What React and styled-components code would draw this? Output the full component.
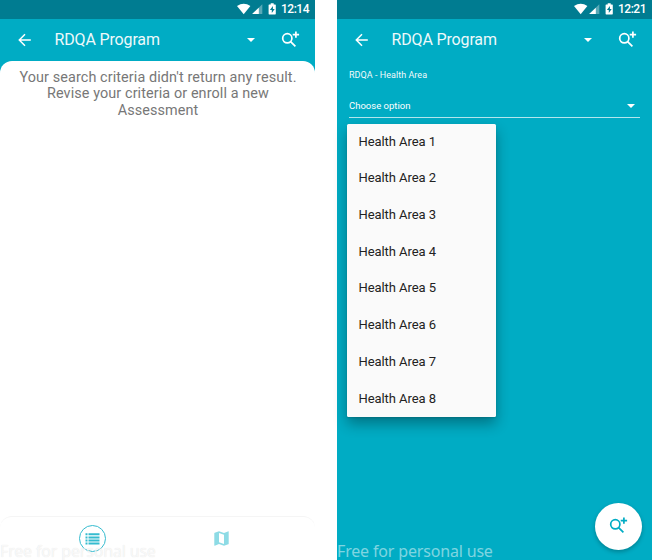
import React from 'react';
import styled, { createGlobalStyle } from 'styled-components';

const Global = createGlobalStyle`
  * { box-sizing: border-box; }
  body { margin: 0; background: #fff; font-family: Roboto, "Liberation Sans", sans-serif; }
`;

const Stage = styled.main`
  display: flex;
  justify-content: space-between;
  width: 652px;
  height: 560px;
  overflow: hidden;
`;

const Phone = styled.section`
  position: relative;
  display: flex;
  flex-direction: column;
  width: 315px;
  height: 560px;
  background: #00acc4;
`;

const StatusBar = styled.div`
  display: flex;
  flex: none;
  align-items: center;
  justify-content: flex-end;
  height: 18.5px;
  padding-right: 6px;
  background: #007c91;
  color: #fff;
`;

const Clock = styled.span`
  width: 28px;
  margin-left: 4px;
  font-size: 12px;
  font-weight: 500;
  line-height: 19px;
  letter-spacing: -0.5px;
  white-space: nowrap;
`;

const Toolbar = styled.header`
  display: flex;
  flex: none;
  align-items: center;
  height: 42.5px;
  padding: 0 15px 0 18px;
  color: #fff;
`;

const Title = styled.h1`
  flex: 1;
  margin: 0 0 0 22.5px;
  font-size: 16px;
  font-weight: 400;
  line-height: 20px;
  letter-spacing: -0.15px;
  opacity: 0.93;
`;

const ToolbarCaret = styled.span`
  display: flex;
  margin-right: 26px;
`;

const Sheet = styled.div`
  display: flex;
  flex: 1;
  flex-direction: column;
  justify-content: space-between;
  background: #fff;
  border-radius: 12px 12px 0 0;
`;

const Message = styled.p`
  margin: 0;
  padding: 8.6px 0 0 1px;
  color: #777;
  font-size: 14.4px;
  line-height: 16.5px;
  letter-spacing: 0.1px;
  text-align: center;
`;

const BottomNav = styled.nav`
  display: flex;
  height: 44px;
  padding: 9px 0 0 79px;
  border-top: 1px solid #f5f5f5;
  border-radius: 12px 12px 0 0;
`;

const ListTab = styled.div`
  display: flex;
  align-items: center;
  justify-content: center;
  width: 27px;
  height: 27px;
  margin-top: -1px;
  border: 1.25px solid #35bccf;
  border-radius: 50%;
`;

const MapTab = styled.div`
  display: flex;
  margin: 5px 0 0 108px;
`;

const Form = styled.div`
  padding: 7px 12.5px 0 12px;
  color: #fff;
`;

const Label = styled.div`
  font-size: 9px;
  line-height: 15px;
  letter-spacing: 0.04px;
  opacity: 0.95;
`;

const Select = styled.div`
  display: flex;
  align-items: center;
  justify-content: space-between;
  height: 24px;
  margin-top: 10.5px;
  padding: 1px 5px 0 0;
  border-bottom: 1px solid rgba(255, 255, 255, 0.7);
  font-size: 9.5px;
`;

const Menu = styled.ul`
  position: absolute;
  left: 9.5px;
  top: 123.5px;
  width: 149.5px;
  height: 293.5px;
  margin: 0;
  padding: 0;
  background: #fafafa;
  border-radius: 1.5px;
  box-shadow: 0 7px 14px rgba(0, 0, 0, 0.32), 0 1px 2px rgba(0, 0, 0, 0.12);
  list-style: none;
`;

const Option = styled.li`
  height: 36.72px;
  padding-left: 12px;
  color: #222;
  font-size: 13px;
  line-height: 36.4px;
  letter-spacing: -0.07px;
`;

const Fab = styled.div`
  position: absolute;
  left: 258px;
  top: 502.5px;
  display: flex;
  align-items: center;
  justify-content: center;
  width: 47px;
  height: 47px;
  padding-bottom: 2px;
  background: #fff;
  border-radius: 50%;
  box-shadow: 0 2px 4px rgba(0, 0, 0, 0.25);
  color: #00acc4;
`;

const Watermark = styled.div`
  position: absolute;
  left: 0;
  bottom: 0;
  height: 18px;
  color: ${(p) => (p.$onWhite ? 'rgba(255, 255, 255, 0.75)' : 'rgba(255, 255, 255, 0.5)')};
  font-family: "Noto Sans", sans-serif;
  font-size: 16px;
  line-height: 18px;
  letter-spacing: -0.17px;
  text-shadow: ${(p) => (p.$onWhite ? '0 0 1px rgba(0, 0, 0, 0.13)' : 'none')};
  white-space: nowrap;
`;

const StatusIcons = () => (
  <svg width="40" height="18" viewBox="0 0 40 18" fill="currentColor">
    <path d="M0 6Q6.700 1.400 13.400 6L6.700 14.200Z" />
    <path d="M25.3 4.3V14H15.2Z" opacity=".35" />
    <path d="M21.8 7.700V14H15.2Z" />
    <path fillRule="evenodd" d="M33.700 3.300h3v1.200h1.500q.6 0 .6.6v8.700q0 .6-.6.6h-6q-.6 0-.6-.6V5.100q0-.6.6-.6h1.500ZM35.900 6l-3 4h1.900v3l2.900-4.100h-1.800Z" />
  </svg>
);

const BackIcon = () => (
  <svg width="14" height="14" viewBox="0 0 14 14" fill="none" stroke="currentColor" strokeWidth="1.5">
    <path d="M12.800 7H1.8M7 1.300L1.300 7L7 12.700" />
  </svg>
);

const Caret = () => (
  <svg width="8" height="4" viewBox="0 0 8 4" fill="currentColor">
    <path d="M0 0H8L4 4Z" />
  </svg>
);

const SearchAdd = () => (
  <svg width="19" height="17" viewBox="0 0 19 17" fill="none" stroke="currentColor" strokeWidth="1.7">
    <circle cx="6.300" cy="7.300" r="4.600" />
    <path d="M9.600 10.600L14.400 15.400M14.900 .4V6.800M11.700 3.600H18.100" />
  </svg>
);

const ListIcon = () => (
  <svg width="15" height="12" viewBox="0 0 15 12" fill="#35bccf">
    <path d="M.5.300h2v2h-2zM3.500.300h11v2h-11zM.5 3.400h2v2h-2zM3.500 3.400h11v2h-11zM.5 6.500h2v2h-2zM3.500 6.500h11v2h-11zM.5 9.600h2v2h-2zM3.500 9.600h11v2h-11z" />
  </svg>
);

const MapIcon = () => (
  <svg width="15" height="15" viewBox="0 0 15 15" fill="#8ddbe5">
    <path fillRule="evenodd" d="M14.500.2L10 2L5 .2L.7 1.700Q.3 1.800.3 2.200V14.300Q.3 14.800.8 14.700L5 13L10 14.800L14.300 13.300Q14.700 13.200 14.700 12.700V.6Q14.700.1 14.500.2ZM5 2L10 3.700V13L5 11.200Z" />
  </svg>
);

function AppHeader({ time }) {
  return (
    <>
      <StatusBar>
        <StatusIcons />
        <Clock>{time}</Clock>
      </StatusBar>
      <Toolbar>
        <BackIcon />
        <Title>RDQA Program</Title>
        <ToolbarCaret><Caret /></ToolbarCaret>
        <SearchAdd />
      </Toolbar>
    </>
  );
}

const areas = [1, 2, 3, 4, 5, 6, 7, 8];

export default function App() {
  return (
    <>
      <Global />
      <Stage>
        <Phone>
          <AppHeader time="12:14" />
          <Sheet>
            <Message>
              Your search criteria didn't return any result.<br />
              Revise your criteria or enroll a new<br />
              Assessment
            </Message>
            <BottomNav>
              <ListTab><ListIcon /></ListTab>
              <MapTab><MapIcon /></MapTab>
            </BottomNav>
          </Sheet>
          <Watermark $onWhite>Free for personal use</Watermark>
        </Phone>
        <Phone>
          <AppHeader time="12:21" />
          <Form>
            <Label>RDQA - Health Area</Label>
            <Select>Choose option<Caret /></Select>
          </Form>
          <Menu>
            {areas.map((n) => <Option key={n}>Health Area {n}</Option>)}
          </Menu>
          <Watermark>Free for personal use</Watermark>
          <Fab><SearchAdd /></Fab>
        </Phone>
      </Stage>
    </>
  );
}
